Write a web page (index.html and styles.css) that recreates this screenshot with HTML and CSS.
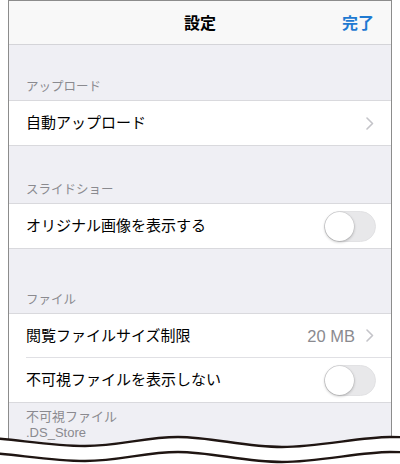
FILE: index.html
```html
<!DOCTYPE html>
<html lang="ja">
<head>
<meta charset="utf-8">
<title>設定</title>
<link rel="stylesheet" href="styles.css">
</head>
<body>
<div class="page">
  <div class="screen">
    <header class="navbar">
      <span></span>
      <span class="nav-title">設定</span>
      <span class="nav-done">完了</span>
    </header>
    <main class="content">
      <div class="section-header sh-upload">アップロード</div>
      <div class="group">
        <div class="row">
          <span class="label">自動アップロード</span>
          <span class="accessory">
            <svg class="chevron" width="8" height="13" viewBox="0 0 8 13"><path d="M1 1 L6.5 6.5 L1 12" fill="none" stroke="#c4c4c9" stroke-width="1.6" stroke-linecap="round" stroke-linejoin="round"/></svg>
          </span>
        </div>
      </div>

      <div class="section-header sh-slide">スライドショー</div>
      <div class="group">
        <div class="row">
          <span class="label">オリジナル画像を表示する</span>
          <span class="toggle"><span class="knob"></span></span>
        </div>
      </div>

      <div class="section-header sh-file">ファイル</div>
      <div class="group">
        <div class="row row-sep">
          <span class="label">閲覧ファイルサイズ制限</span>
          <span class="accessory">
            <span class="value">20 MB</span>
            <svg class="chevron" width="8" height="13" viewBox="0 0 8 13"><path d="M1 1 L6.5 6.5 L1 12" fill="none" stroke="#c4c4c9" stroke-width="1.6" stroke-linecap="round" stroke-linejoin="round"/></svg>
          </span>
        </div>
        <div class="row">
          <span class="label">不可視ファイルを表示しない</span>
          <span class="toggle"><span class="knob"></span></span>
        </div>
      </div>

      <div class="section-footer">
        <div>不可視ファイル</div>
        <div>.DS_Store</div>
      </div>
    </main>
  </div>
  <svg class="tear" width="400" height="464" viewBox="0 0 400 464">
    <path d="M-10,438 C 15,439 50,446 85,446 S 145,437 178,437 S 245,447 282,447 S 360,437 390,437 S 410,439 420,440 L420,470 L-10,470 Z" fill="#ffffff"/>
    <path d="M-10,438 C 15,439 50,446 85,446 S 145,437 178,437 S 245,447 282,447 S 360,437 390,437 S 410,439 420,440" fill="none" stroke="#1f1512" stroke-width="2.4"/>
    <path d="M-10,453 C 15,454 50,461 85,461 S 145,452 178,452 S 245,462 282,462 S 360,452 390,452 S 410,454 420,455" fill="none" stroke="#1f1512" stroke-width="2.4"/>
  </svg>
</div>
</body>
</html>
```

FILE: styles.css
```css
* {
  box-sizing: border-box;
}

html, body {
  margin: 0;
  padding: 0;
  background: #ffffff;
}

body {
  font-family: "Liberation Sans", "Noto Sans CJK JP", sans-serif;
  color: #000000;
}

.page {
  position: relative;
  width: 400px;
  height: 464px;
  overflow: hidden;
  background: #ffffff;
}

.screen {
  margin-left: 8px;
  width: 384px;
  height: 464px;
  border: 1px solid #8c8c8c;
  border-bottom: none;
  display: flex;
  flex-direction: column;
  background: #efeff4;
}

.navbar {
  height: 44px;
  flex: none;
  display: grid;
  grid-template-columns: 1fr auto 1fr;
  align-items: center;
  background: #f8f8f8;
  border-bottom: 1px solid #d4d4d8;
  padding: 0 17px 1px 17px;
}

.nav-title {
  font-family: "Noto Sans CJK JP", sans-serif;
  font-size: 16px;
  font-weight: 700;
  line-height: 20px;
}

.nav-done {
  justify-self: end;
  font-family: "Noto Sans CJK JP", sans-serif;
  font-size: 16px;
  font-weight: 700;
  line-height: 20px;
  color: #1f7ad2;
}

.content {
  flex: 1;
  display: flex;
  flex-direction: column;
  background: #efeff4;
}

.section-header {
  display: flex;
  align-items: flex-end;
  padding: 0 17px 5px 17px;
  font-size: 12.5px;
  line-height: 16px;
  color: #8a8a8f;
}

.sh-upload { height: 55px; }
.sh-slide { height: 57px; }
.sh-file { height: 64px; }

.group {
  background: #ffffff;
  border-top: 1px solid #d9d9dd;
  border-bottom: 1px solid #d9d9dd;
}

.row {
  height: 44px;
  display: flex;
  align-items: center;
  justify-content: space-between;
  padding: 0 15px 0 17px;
  position: relative;
}

.row-sep {
  border-bottom: 1px solid #e0e0e4;
}

.row-sep::after {
  content: "";
  position: absolute;
  left: 0;
  bottom: -1px;
  width: 17px;
  height: 1px;
  background: #ffffff;
}

.label {
  font-size: 15px;
  line-height: 20px;
  white-space: nowrap;
}

.accessory {
  display: flex;
  align-items: center;
  gap: 11px;
  padding-right: 2px;
}

.chevron {
  display: block;
}

.value {
  font-size: 16.5px;
  line-height: 20px;
  color: #8a8a8f;
}

.toggle {
  width: 52px;
  height: 31px;
  border-radius: 16px;
  background: #e8e8ea;
  border: 1px solid #e2e2e4;
  position: relative;
  flex: none;
}

.knob {
  position: absolute;
  left: 0;
  top: 0;
  width: 29px;
  height: 29px;
  border-radius: 50%;
  background: #ffffff;
  box-shadow: 0 1px 3px rgba(0, 0, 0, 0.28), 0 0 0 0.5px rgba(0, 0, 0, 0.08);
}

.section-footer {
  padding: 6px 17px 0 17px;
  font-size: 13px;
  line-height: 16px;
  color: #8a8a8f;
}

.tear {
  position: absolute;
  left: 0;
  top: 0;
  display: block;
}
```
